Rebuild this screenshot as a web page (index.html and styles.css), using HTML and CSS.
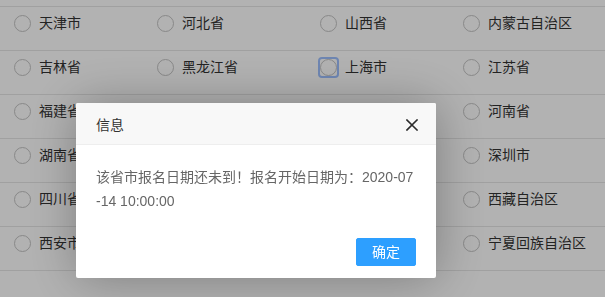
FILE: index.html
```html
<!DOCTYPE html>
<html lang="zh-CN">
<head>
<meta charset="utf-8">
<title>信息</title>
<link rel="stylesheet" href="styles.css">
</head>
<body>
<div class="list">
  <div class="row">
    <label class="item"><span class="radio"></span><span class="name">天津市</span></label>
    <label class="item"><span class="radio"></span><span class="name">河北省</span></label>
    <label class="item"><span class="radio"></span><span class="name">山西省</span></label>
    <label class="item"><span class="radio"></span><span class="name">内蒙古自治区</span></label>
  </div>
  <div class="row">
    <label class="item"><span class="radio"></span><span class="name">吉林省</span></label>
    <label class="item"><span class="radio"></span><span class="name">黑龙江省</span></label>
    <label class="item"><span class="ring"><span class="radio"></span></span><span class="name">上海市</span></label>
    <label class="item"><span class="radio"></span><span class="name">江苏省</span></label>
  </div>
  <div class="row">
    <label class="item"><span class="radio"></span><span class="name">福建省</span></label>
    <label class="item"><span class="radio"></span><span class="name">江西省</span></label>
    <label class="item"><span class="radio"></span><span class="name">山东省</span></label>
    <label class="item"><span class="radio"></span><span class="name">河南省</span></label>
  </div>
  <div class="row">
    <label class="item"><span class="radio"></span><span class="name">湖南省</span></label>
    <label class="item"><span class="radio"></span><span class="name">广东省</span></label>
    <label class="item"><span class="radio"></span><span class="name">广西省</span></label>
    <label class="item"><span class="radio"></span><span class="name">深圳市</span></label>
  </div>
  <div class="row">
    <label class="item"><span class="radio"></span><span class="name">四川省</span></label>
    <label class="item"><span class="radio"></span><span class="name">贵州省</span></label>
    <label class="item"><span class="radio"></span><span class="name">云南省</span></label>
    <label class="item"><span class="radio"></span><span class="name">西藏自治区</span></label>
  </div>
  <div class="row">
    <label class="item"><span class="radio"></span><span class="name">西安市</span></label>
    <label class="item"><span class="radio"></span><span class="name">甘肃省</span></label>
    <label class="item"><span class="radio"></span><span class="name">青海省</span></label>
    <label class="item"><span class="radio"></span><span class="name">宁夏回族自治区</span></label>
  </div>
</div>

<div class="shade"></div>

<div class="dialog">
  <div class="dialog-title">
    <span>信息</span>
    <svg class="close" width="12" height="12" viewBox="0 0 12 12" aria-hidden="true">
      <path d="M1 1 L11 11 M11 1 L1 11" stroke="#2b2b2b" stroke-width="1.6" stroke-linecap="square"/>
    </svg>
  </div>
  <div class="dialog-content">该省市报名日期还未到！报名开始日期为：2020-07-14 10:00:00</div>
  <div class="dialog-btns"><a class="btn">确定</a></div>
</div>
</body>
</html>
```

FILE: styles.css
```css
html, body {
  margin: 0;
  padding: 0;
  background: #fff;
  font-family: "Liberation Sans", "Noto Sans CJK SC", sans-serif;
  font-size: 14px;
  color: #333;
  overflow: hidden;
}

.list {
  margin-top: 6px;
  border-top: 1px solid #e6e6e6;
}

.row {
  display: grid;
  grid-template-columns: 143px 163px 143px 1fr;
  align-items: start;
  padding: 8px 0 0 14px;
  box-sizing: border-box;
  height: 44px;
  border-bottom: 1px solid #e6e6e6;
}

.item {
  display: flex;
  align-items: center;
  gap: 8px;
  height: 17px;
}

.radio {
  display: block;
  width: 17px;
  height: 17px;
  box-sizing: border-box;
  border: 1px solid #c4c4c4;
  border-radius: 50%;
  background: #fff;
  flex: none;
}

.ring {
  display: block;
  flex: none;
  border-radius: 2px;
  outline: 2px solid #9ec0ff;
  outline-offset: 0;
}

.name {
  line-height: 17px;
  white-space: nowrap;
}

.shade {
  position: fixed;
  inset: 0;
  background: rgba(0, 0, 0, 0.3);
}

.dialog {
  position: fixed;
  left: 76px;
  top: 103px;
  width: 360px;
  background: #fff;
  border-radius: 2px;
  box-shadow: 1px 1px 50px rgba(0, 0, 0, 0.3);
}

.dialog-title {
  display: flex;
  align-items: center;
  justify-content: space-between;
  height: 41px;
  padding: 0 18px 0 20px;
  background: #f8f8f8;
  border-bottom: 1px solid #eee;
  color: #333;
  border-radius: 2px 2px 0 0;
}

.close {
  display: block;
  margin-top: 2px;
}

.dialog-content {
  padding: 20px;
  line-height: 24px;
  color: #666;
  word-break: break-all;
}

.dialog-btns {
  display: flex;
  justify-content: flex-end;
  padding: 0 15px 12px;
}

.btn {
  display: block;
  line-height: 26px;
  margin: 5px 5px 0;
  padding: 0 15px;
  border: 1px solid #2d9fff;
  box-sizing: border-box;
  height: 28px;
  background: #2d9fff;
  color: #fff;
  border-radius: 2px;
}
```
